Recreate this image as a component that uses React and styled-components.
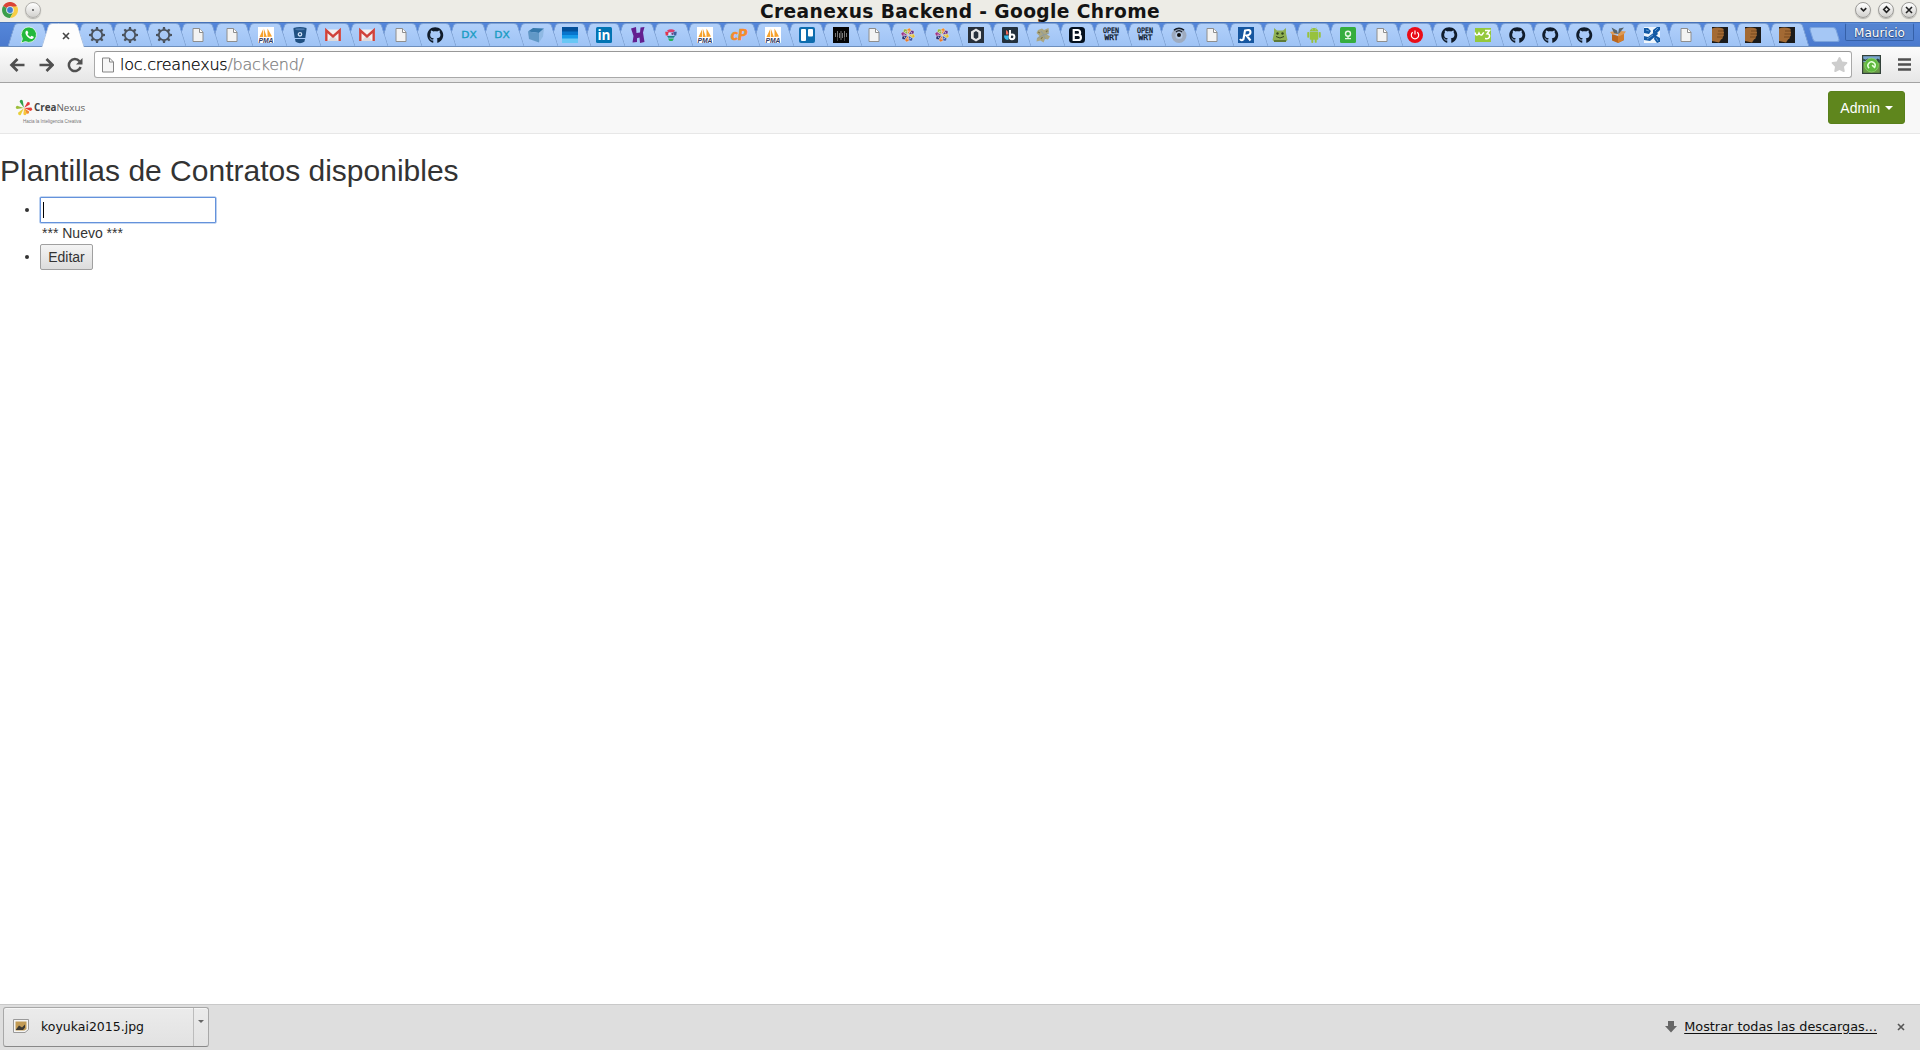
import React from "react";
import styled, { createGlobalStyle, css } from "styled-components";
import { FaGithub, FaStar } from "react-icons/fa";
import { AiFillAndroid } from "react-icons/ai";

const GlobalStyle = createGlobalStyle`
  * { box-sizing: border-box; }
  html, body { margin: 0; padding: 0; background: #fff; overflow: hidden; }
`;

const uiFont = css`font-family: "DejaVu Sans", sans-serif;`;

const Window = styled.div`
  display: flex;
  flex-direction: column;
  width: 1920px;
  height: 1050px;
  overflow: hidden;
`;

const TitleBar = styled.header`
  display: grid;
  grid-template-columns: 90px 1fr 90px;
  align-items: center;
  height: 22px;
  flex: none;
  background: #edece6;
`;
const TitleLeft = styled.div`
  display: flex;
  align-items: center;
  gap: 7px;
  padding: 0 0 3px 2px;
  svg { display: block; }
`;
const Title = styled.div`
  ${uiFont}
  text-align: center;
  font-weight: bold;
  font-size: 18.67px;
  letter-spacing: 0.38px;
  line-height: 22px;
  padding-top: 1px;
  height: 22px;
  color: #141414;
  white-space: nowrap;
`;
const TitleButtons = styled.div`
  display: flex;
  justify-content: flex-end;
  gap: 7px;
  padding: 0 3px 3px 0;
`;
const RoundButton = styled.span`
  display: flex;
  align-items: center;
  justify-content: center;
  width: 16px;
  height: 16px;
  border-radius: 50%;
  border: 1px solid ${(p) => (p.$soft ? "#b0afab" : "#9c9b98")};
  background: linear-gradient(#fff, #d2d1ce);
  box-shadow: 0 1px 1px rgba(0, 0, 0, 0.25);
`;

const TabStrip = styled.nav`
  display: flex;
  align-items: flex-end;
  height: 25px;
  flex: none;
  padding-left: 7.5px;
  background: linear-gradient(#5486da, #4b7acd);
  border-top: 1px solid #4672b8;
  border-bottom: 1px solid #6d8fbd;
  position: relative;
`;
const Tab = styled.div`
  position: relative;
  z-index: ${(p) => p.$z};
  flex: none;
  display: flex;
  align-items: center;
  justify-content: center;
  width: 43px;
  height: ${(p) => (p.$active ? 24 : 23)}px;
  margin-right: -9.2px;
  margin-bottom: ${(p) => (p.$active ? -1 : 0)}px;
  padding-top: 1px;
  padding-left: ${(p) => (p.$active ? 6 : 0)}px;
  svg { display: block; position: relative; z-index: 1; overflow: visible; }
  &::before, &::after {
    content: "";
    position: absolute;
    top: 0;
    bottom: 0;
    width: 18px;
    background: ${(p) => (p.$active ? "#fdfdfd" : "linear-gradient(#b1d0fa, #9fc3f5)")};
    border: 0 solid ${(p) => (p.$active ? "#a9bfdf" : "#7fa2d3")};
    border-top-width: 1px;
  }
  &::before {
    left: 3.2px;
    border-left-width: 1px;
    border-top-left-radius: 4px;
    transform: skewX(-17deg);
  }
  &::after {
    right: 3.2px;
    border-right-width: 1px;
    border-top-right-radius: 4px;
    transform: skewX(17deg);
  }
`;
const TabFill = styled.span`
  position: absolute;
  left: 14px;
  right: 14px;
  top: 1px;
  bottom: 0;
  z-index: 1;
  background: ${(p) => (p.$active ? "#fdfdfd" : "linear-gradient(#b1d0fa, #9fc3f5)")};
`;
const NewTab = styled.span`
  width: 27px;
  height: 15px;
  margin: 0 0 4px 11px;
  transform: skewX(17deg);
  border: 1px solid #7ba3dc;
  border-radius: 3px;
  background: #a5c7f5;
`;
const Profile = styled.span`
  ${uiFont}
  margin: 0 6px 5px auto;
  width: 69px;
  height: 18px;
  border: 1px solid #3560a8;
  border-top-color: #5b8ddc;
  border-radius: 2px;
  background: #5483d0;
  color: #fff;
  font-size: 12px;
  line-height: 18px;
  text-align: center;
  text-shadow: 0 1px 1px #223f70, 0 0 1px #223f70;
`;

const Toolbar = styled.div`
  display: flex;
  align-items: center;
  height: 36px;
  flex: none;
  padding: 0 9px;
  background: linear-gradient(#fcfcfc, #e6e6e6);
  border-bottom: 1px solid #a3a3a3;
`;
const NavIcons = styled.div`
  display: flex;
  gap: 13px;
  width: 85px;
  svg { display: block; }
`;
const Omnibox = styled.div`
  ${uiFont}
  display: flex;
  align-items: center;
  flex: 1;
  height: 27px;
  padding: 0 3px 0 7px;
  margin-right: 10px;
  border: 1px solid #a9a9a9;
  border-top-color: #989898;
  border-radius: 3px;
  background: #fff;
  font-size: 16px;
  color: #000;
`;
const Url = styled.span`
  flex: 1;
  margin-left: 6px;
  font-weight: 200;
  letter-spacing: -0.23px;
  white-space: nowrap;
  -webkit-text-stroke: 0.25px currentColor;
`;
const UrlPath = styled.span`color: #808080;`;
const ToolbarEnd = styled.div`
  display: flex;
  align-items: center;
  gap: 17px;
  svg { display: block; }
`;

const SiteBar = styled.div`
  display: flex;
  justify-content: space-between;
  align-items: flex-start;
  height: 51px;
  flex: none;
  padding: 8px 15px 0 15px;
  background: #f8f8f8;
  border-bottom: 1px solid #e7e7e7;
`;
const Brand = styled.div`
  display: flex;
  flex-direction: column;
  margin-top: 7px;
`;
const BrandRow = styled.div`
  display: flex;
  align-items: center;
  height: 19px;
  font: 9.8px/18px "Open Sans", sans-serif;
  color: #606060;
  b { color: #444; font-weight: 700; }
  svg { margin-right: 1px; }
`;
const Slogan = styled.div`
  font: 4.5px/7px "Liberation Sans", sans-serif;
  color: #777;
  margin-left: 8px;
  padding-top: 1px;
  white-space: nowrap;
`;
const AdminButton = styled.button`
  display: flex;
  align-items: center;
  height: 33px;
  padding: 0 11.5px;
  border: 1px solid #59801b;
  border-radius: 3px;
  background: #5f861d;
  color: #fff;
  font: 14px/20px "Liberation Sans", Arial, sans-serif;
`;
const Caret = styled.span`
  margin-left: 4.5px;
  border: 4px solid transparent;
  border-top-color: #fff;
  border-bottom: 0;
`;

const Content = styled.main`
  flex: 1;
  background: #fff;
  color: #333;
  font: 14px/20px "Liberation Sans", Arial, sans-serif;
`;
const Heading = styled.h2`
  margin: 20px 0 9px;
  font-size: 30px;
  font-weight: 500;
  line-height: 33px;
`;
const List = styled.ul`
  margin: 0;
  padding-left: 40px;
`;
const TextInput = styled.div`
  display: inline-flex;
  align-items: center;
  vertical-align: middle;
  width: 176px;
  height: 26px;
  padding-left: 2px;
  border: 1px solid #6492db;
  border-radius: 1px;
  box-shadow: 0 0 0 0.6px #8db1e6;
  background: #fff;
`;
const Cursor = styled.span`
  width: 1px;
  height: 16px;
  background: #000;
`;
const Option = styled.div`padding-left: 2px;`;
const EditButton = styled.button`
  width: 53px;
  height: 26px;
  padding: 0;
  vertical-align: middle;
  border: 1px solid #a0a0a0;
  border-radius: 2px;
  background: linear-gradient(#f4f4f4, #dcdcdc);
  color: #333;
  font: 14px/20px "Liberation Sans", Arial, sans-serif;
`;
const Item = styled.li`
  height: ${(p) => p.$h}px;
  line-height: 26px;
  ${Option} { line-height: 20px; }
`;

const Shelf = styled.footer`
  ${uiFont}
  display: flex;
  align-items: center;
  height: 46px;
  flex: none;
  padding: 0 15px 1px 3px;
  background: #dedede;
  border-top: 1px solid #c9c9c9;
  color: #111;
`;
const Download = styled.div`
  display: flex;
  width: 206px;
  height: 40px;
  border: 1px solid #a8a8a8;
  border-bottom-color: #888;
  border-radius: 3px;
  background: linear-gradient(#ebebeb, #e2e2e2);
  box-shadow: inset 0 1px #f6f6f6;
`;
const DownloadName = styled.div`
  display: flex;
  align-items: center;
  gap: 12px;
  flex: 1;
  padding: 0 0 2px 9px;
  font-size: 12.5px;
`;
const DownloadMenu = styled.div`
  display: flex;
  justify-content: center;
  width: 15px;
  padding-top: 12px;
  border-left: 1px solid #bcbcbc;
  &::after {
    content: "";
    height: 3px;
    border: 3px solid transparent;
    border-top-color: #666;
    border-bottom: 0;
  }
`;
const ShelfEnd = styled.div`
  display: flex;
  align-items: center;
  margin-left: auto;
  font-size: 12.85px;
  a { color: #111; text-decoration: underline; text-underline-offset: 2px; margin: 0 20px 0 7px; padding-bottom: 2px; white-space: nowrap; }
`;

const Svg = ({ s = 16, children, ...rest }) => (
  <svg width={s} height={s} viewBox="0 0 16 16" {...rest}>{children}</svg>
);

const Page = () => (
  <Svg>
    <path d="M3 1.500h6.500l3.500 3.500v9.500H3z" fill="#f3f3f3" stroke="#8e8e8e" />
    <path d="M9.500 1.500v4H13" fill="#fff" stroke="#8e8e8e" />
  </Svg>
);
const Gear = () => (
  <Svg>
    <circle cx="8" cy="8" r="5.200" fill="none" stroke="#4b535e" strokeWidth="1.800" />
    {[0, 45, 90, 135, 180, 225, 270, 315].map((a) => (
      <path key={a} d="M6.500 2.800L7 0h2l.5 2.800z" fill="#4b535e" transform={`rotate(${a} 8 8)`} />
    ))}
  </Svg>
);
const Pma = () => (
  <Svg>
    <rect width="16" height="16" fill="#fff" />
    <path d="M1.500 10L5 2.500V10zM5.800 10V1.500l3 8.500zM9.500 10V1.500l4.500 8z" fill="#f6a22d" />
    <text x="8" y="15.900" textAnchor="middle" fontFamily="Liberation Sans" fontWeight="bold" fontStyle="italic" fontSize="6.800" textLength="15" lengthAdjust="spacingAndGlyphs" fill="#33385f">PMA</text>
  </Svg>
);
const Bucket = () => (
  <Svg>
    <path d="M1.500 2.500V1Q8-1 14.500 1v1.500L13.300 11H2.700zM3 12h10l-.6 2.800Q8 17.500 3.600 14.800z" fill="#205081" />
    <ellipse cx="8" cy="2.300" rx="4.800" ry="1" fill="#4a78ad" />
    <circle cx="8" cy="7.300" r="1.700" fill="none" stroke="#cfe0f5" strokeWidth="1.300" />
  </Svg>
);
const Gmail = () => (
  <Svg>
    <path d="M0 2.500h16v11.500H0z" fill="#f3efef" />
    <path d="M2.500 14L8 8l5.500 6z" fill="#dedada" />
    <path d="M1.300 14V3.500L8 9.300l6.700-5.800V14" fill="none" stroke="#d0423a" strokeWidth="2.400" />
  </Svg>
);
const Hub = () => <FaGithub size={16.5} color="#101c2b" />;
const Dx = () => (
  <Svg><text x="8" y="11" textAnchor="middle" fontFamily="DejaVu Sans" fontSize="9.500" textLength="15.500" lengthAdjust="spacingAndGlyphs" fill="#179cc2" stroke="#179cc2" strokeWidth=".3">DX</text></Svg>
);
const Cube = () => (
  <Svg>
    <path d="M0 4.500L5 1l11 .5-5 4.500z" fill="#3678ab" /><path d="M0 4.500L11 6v9.500L1 12z" fill="#6198c6" /><path d="M11 6l5-4.500-1 8-4 6z" fill="#8fb9e4" />
  </Svg>
);
const Bands = () => (
  <Svg><path d="M0 0h16v5H0z" fill="#03509a" /><path d="M0 4.500h16V8H0z" fill="#0874cc" /><path d="M0 8h16v4H0z" fill="#1699e8" /><path d="M0 11.500h16V16H0z" fill="#68c7f5" /></Svg>
);
const Linked = () => (
  <Svg><rect width="16" height="16" rx="1.500" fill="#0274b3" /><text x="8" y="13" textAnchor="middle" fontFamily="Open Sans" fontWeight="bold" fontSize="13.500" fill="#fff">in</text></Svg>
);
const Heidi = () => (
  <Svg><path d="M1 1.500L6 0l.5 6L10 5.500 10.500.5 14.500 0l-1.500 5.500L14.500 15l-4.500 1-.5-5.500-2.500.8V15l-4.500.5L3.500 9z" fill="#63208f" /></Svg>
);
const Sphere = () => (
  <Svg>
    <path d="M4 3.600Q8 .8 12 3.600l-1.500 1.600h-5z" fill="#dc3c6c" />
    <path d="M2.200 4.800h3.500L5 8.500H2.800z" fill="#e3344c" /><path d="M10.300 4.800h3.500l-.6 3.700H11z" fill="#3d5f9e" />
    <circle cx="6.600" cy="6.800" r="1.100" fill="#e8eef8" /><circle cx="9.500" cy="6.800" r="1.100" fill="#7a3c78" />
    <path d="M4 9h8l-1.200 1.800H5.200z" fill="#1b7f86" /><path d="M5 11.400h6L9.500 14h-3z" fill="#24b45b" />
  </Svg>
);
const Cpanel = () => (
  <Svg><text x="8" y="12.800" textAnchor="middle" fontFamily="Lato" fontWeight="900" fontStyle="italic" fontSize="14.500" textLength="16" lengthAdjust="spacingAndGlyphs" fill="#f58b2b" stroke="#f58b2b" strokeWidth=".6">cP</text></Svg>
);
const Trello = () => (
  <Svg><rect width="16" height="16" rx="2" fill="#0d6cad" /><rect x="2" y="2" width="5" height="12" rx="1" fill="#fff" /><rect x="9" y="2" width="5" height="7.500" rx="1" fill="#fff" /></Svg>
);
const Wave = () => (
  <Svg><rect width="16" height="16" fill="#050505" /><path d="M2.500 6v4M4.500 4v6M6.500 6v5M8 4v9M9.500 6v5M11.500 4v6M13.500 6v4" stroke="#858585" strokeWidth=".9" /><path d="M4.500 10v4M11.500 10v4" stroke="#444" /></Svg>
);
const Pinwheel = () => (
  <Svg>
    {["#f08c2e", "#6d3285", "#e3bd2f", "#3d5ba9", "#e67a2c", "#262f72", "#9c3584", "#97b63a"].map((c, i) => (
      <g key={c} transform={`rotate(${i * 45 + 12} 8 8)`}>
        <path d="M8 7.500L5.800 2.500 8 .8l2.200 1.700z" fill={c} stroke="#eef2fb" strokeWidth=".3" />
        <circle cx="8" cy="4" r=".55" fill="#eef2fb" />
      </g>
    ))}
  </Svg>
);
const Hexagon = () => (
  <Svg><rect width="16" height="16" fill="#27303b" /><path d="M8 1.500l5 3v7l-5 3-5-3v-7z" fill="#e6e6e6" /><path d="M8 4l2.300 1.500v5L8 12l-2.300-1.500v-5z" fill="#27303b" /></Svg>
);
const Letter6 = () => (
  <Svg><rect width="16" height="16" rx="1" fill="#23303c" /><path d="M4 3q2.500 1 2.500 4.500H4z" fill="#f26b5b" /><path d="M2 8.500h4.500V13Q2 13 2 8.500z" fill="#37b7e8" /><circle cx="10" cy="9.800" r="2.400" fill="none" stroke="#fff" strokeWidth="2" /><path d="M8 3v7" stroke="#fff" strokeWidth="1.900" /></Svg>
);
const Fan = () => (
  <Svg><path d="M3 3l4-1.500 2 1.500 4.500-2 .5 4-2 2.500 3 2-2 3-3-.5-1.500 3.500-3-2-4 1L2 11l2.500-2L1.500 6z" fill="#aba682" /><path d="M6 4l3 4 5-2M2.500 11.500L8 8l2.500 4" stroke="#8f9b9c" fill="none" strokeWidth="1" /><path d="M5 6l-2-1M11 5l1.500-1.500M6 12l1.500-2" stroke="#7e7448" strokeWidth="1.200" /></Svg>
);
const Boot = () => (
  <Svg><rect width="16" height="16" rx="3.500" fill="#04101e" /><path d="M4.700 3h4a2.300 2.300 0 010 4.800h-4zM4.700 7.800h4.600a2.600 2.600 0 010 5.200H4.700z" fill="none" stroke="#fff" strokeWidth="2.200" /></Svg>
);
const Wrt = () => (
  <Svg>
    <g fontFamily="DejaVu Sans Mono" fontSize="7.500" fill="#0a1526" stroke="#0a1526" strokeWidth=".3" textAnchor="middle">
      <text x="8" y="5.800" textLength="16" lengthAdjust="spacingAndGlyphs">OPEN</text><text x="8.500" y="13.300" textLength="14" lengthAdjust="spacingAndGlyphs">WRT</text>
    </g>
  </Svg>
);
const Eye = () => (
  <Svg><circle cx="8" cy="8.500" r="7.500" fill="#9eabbf" /><circle cx="8" cy="8.500" r="3.600" fill="#b4c8e4" /><circle cx="8" cy="8" r="2" fill="#111" /><path d="M3 3.200Q8-.8 13 3.200" fill="none" stroke="#18202c" strokeWidth="1.500" /><path d="M5 5Q8 2.300 11 5" fill="none" stroke="#18202c" strokeWidth="1.200" /></Svg>
);
const Note = () => (
  <Svg><rect width="16" height="16" fill="#16569f" /><path d="M2 12q1.500 2.500 3.500 0L7 3.500Q12.500 2 12.500 5q0 3-4 3.500l4 5" fill="none" stroke="#fff" strokeWidth="2.100" /></Svg>
);
const Creature = () => (
  <Svg><path d="M2 1l3 2.500h6L14 1v5l1.500 7-2 2h-11L.5 13 2 6z" fill="#8fb052" /><path d="M2 13h12v2H2z" fill="#5d7a36" /><circle cx="5.500" cy="6.500" r="1.200" fill="#31451c" /><circle cx="10.500" cy="6.500" r="1.200" fill="#31451c" /><path d="M4 9.500q4 3 8 0" stroke="#31451c" fill="none" /></Svg>
);
const Droid = () => <AiFillAndroid size={18} color="#97c23c" />;
const Green = () => (
  <Svg><rect width="16" height="16" rx="1.500" fill="#35ad3e" /><circle cx="8" cy="6.700" r="2.500" fill="none" stroke="#e6f6e4" strokeWidth="1.400" /><path d="M8 9v2M5 11.700h6" stroke="#e6f6e4" strokeWidth="1.300" /></Svg>
);
const Power = () => (
  <Svg><circle cx="8" cy="8" r="8" fill="#ea0c17" /><path d="M5.700 5.300a3.700 3.700 0 104.600 0M8 3.500v4" fill="none" stroke="#fff" strokeWidth="1.200" /></Svg>
);
const W3 = () => (
  <Svg><rect y="1" width="16" height="14" fill="#94c83d" /><path d="M.3 5.500v1.300Q1.500 9 3.300 7.500L4 6l.8 1.500Q7 9 7.800 6.500L9 5.500" fill="none" stroke="#fff" strokeWidth="1.500" /><path d="M10 3.500h4.500L12 6.800q3 .2 2.500 2.800t-4.500 2" fill="none" stroke="#fff" strokeWidth="1.500" /></Svg>
);
const Crate = () => (
  <Svg><path d="M2 7l6 2 6-3v7l-6 3-6-2.500z" fill="#b9651d" /><path d="M8 9l6-3v7l-6 3z" fill="#d07c2c" /><path d="M2 7.500L0 5l5-1 3 3zM8 7l3-3 5 .5-2 2.500-5.500 2.500z" fill="#dd9a55" /><path d="M1.500.5L7 3.500l1 3.500-4-1zM9 1.500l5-1L9.500 6 8 7z" fill="#59656b" /></Svg>
);
const Knot = () => (
  <Svg>
    <rect width="16" height="16" fill="#eef5fc" />
    <path d="M0 1h4l3 3-2 3-5-1zM9 3l4-3h3v3l-4 4-3-1zM0 9l4 1 8-6 2 3-8 7-6-1zM11 8l5 3v4l-3 1-3-4z" fill="#1259a4" />
    <path d="M2 3l3 1M11 4l3-3M3 12l6-4M12 11l2 3" stroke="#6da3d8" strokeWidth=".9" />
  </Svg>
);
const Fist = () => (
  <Svg><rect width="16" height="16" fill="#1b1b1b" /><path d="M0 1.500Q5-.5 11 1.500q1.500 1 .3 2.500 1.500 1.500.2 3 1.200 1.500-.8 3 .6 1.800-1.700 2.500L7 15.500 0 14z" fill="#a36a34" /><path d="M6 4h5M5.500 7h6M5 10h5.500" stroke="#6d421b" strokeWidth=".8" /></Svg>
);
const Whats = () => (
  <Svg><path d="M8.200 0a7.700 7.700 0 11-3.800 14.600L0 16l1.400-4.200A7.700 7.700 0 018.200 0z" fill="#22b93c" stroke="#e9f8ea" strokeWidth=".8" /><path d="M5.200 3.700c-2.300 2 .8 7 5 8.300 1.700.3 2.800-1 2.500-2.200L10.500 8.700 9.200 10C7.700 9.300 6.900 8.200 6.400 7.100L7.400 6 6.400 3.700z" fill="#fff" /></Svg>
);
const Close = ({ s = 8, color = "#444" }) => (
  <svg width={s} height={s} viewBox="0 0 8 8"><path d="M1 1l6 6M7 1L1 7" stroke={color} strokeWidth="1.600" /></svg>
);

const tabs = [
  Whats, Close, Gear, Gear, Gear, Page, Page, Pma, Bucket, Gmail, Gmail, Page, Hub, Dx, Dx, Cube, Bands,
  Linked, Heidi, Sphere, Pma, Cpanel, Pma, Trello, Wave, Page, Pinwheel, Pinwheel, Hexagon, Letter6, Fan,
  Boot, Wrt, Wrt, Eye, Page, Note, Creature, Droid, Green, Page, Power, Hub, W3, Hub, Hub, Hub, Crate,
  Knot, Page, Fist, Fist, Fist,
];

const petals = [
  ["#e2383c", 45, 8.5], ["#e63f35", 100, 9], ["#f08a30", 140, 8], ["#f6c437", 170, 8],
  ["#e8cf3b", 218, 9.5], ["#9cbf3b", 275, 9], ["#35a04a", 338, 9.5],
];

export default function App() {
  return (
    <Window>
      <GlobalStyle />
      <TitleBar>
        <TitleLeft>
          <Svg>
            <path d="M8 8L1.100 4A8 8 0 0115 4z" fill="#db4437" />
            <path d="M8 8L1.100 4A8 8 0 008 16l3.500-6z" fill="#3c9e4b" />
            <path d="M8 4.500h7.200A8 8 0 018 16l3.500-6z" fill="#f7ce45" />
            <circle cx="8" cy="8" r="3.800" fill="#e9eef5" /><circle cx="8" cy="8" r="2.900" fill="#3f7fd0" />
          </Svg>
          <RoundButton $soft><svg width="4" height="4"><circle cx="2" cy="2" r="1" fill="#555" /></svg></RoundButton>
        </TitleLeft>
        <Title>Creanexus Backend - Google Chrome</Title>
        <TitleButtons>
          <RoundButton><Svg s={11}><path d="M4 6l4 4 4-4" fill="none" stroke="#222" strokeWidth="2.400" /></Svg></RoundButton>
          <RoundButton><Svg s={11}><path d="M8 4l4 4-4 4-4-4z" fill="none" stroke="#222" strokeWidth="2.400" /></Svg></RoundButton>
          <RoundButton><Close s={8} color="#222" /></RoundButton>
        </TitleButtons>
      </TitleBar>

      <TabStrip>
        {tabs.map((Icon, i) => (
          <Tab key={i} $active={i === 1} $z={i === 1 ? 99 : 60 - i}>
            <TabFill $active={i === 1} />
            <Icon />
          </Tab>
        ))}
        <NewTab />
        <Profile>Mauricio</Profile>
      </TabStrip>

      <Toolbar>
        <NavIcons>
          <Svg><path d="M15.500 8H3.500M8.500 2l-6 6 6 6" fill="none" stroke="#505050" strokeWidth="2.700" /></Svg>
          <Svg><path d="M1.500 8h12M8.500 2l6 6-6 6" fill="none" stroke="#505050" strokeWidth="2.700" /></Svg>
          <Svg><path d="M12.500 4.200A6 6 0 1013.600 10" fill="none" stroke="#505050" strokeWidth="2.500" /><path d="M15.500 1v6.500H9z" fill="#505050" /></Svg>
        </NavIcons>
        <Omnibox>
          <svg width="12" height="16" viewBox="0 0 12 16">
            <path d="M.5 1h7l4 4v10H.5zM7.500 1v4h4" fill="#f6f6f6" stroke="#858585" />
          </svg>
          <Url>loc.creanexus<UrlPath>/backend/</UrlPath></Url>
          <FaStar size={17} color="#cdcdcd" />
        </Omnibox>
        <ToolbarEnd>
          <Svg s={19}>
            <rect width="16" height="16" fill="#33423a" /><path d="M1 1h14v5H1z" fill="#78a3cc" /><path d="M1 6h14v9H1z" fill="#6a9a48" />
            <path d="M1 3l2 1 2-1 1 2H1zM11 5l2-2 2 1v3z" fill="#2d4a3c" />
            <circle cx="8" cy="8.500" r="5.800" fill="#5fb93e" stroke="#8ed66c" strokeWidth=".6" /><path d="M6 11a3 3 0 114.500-.5M8.500 8.500L11 11" fill="none" stroke="#e9ffe0" strokeWidth="1.300" />
          </Svg>
          <svg width="13" height="13"><path d="M0 1.500h13M0 6.500h13M0 11.500h13" stroke="#505050" strokeWidth="2.700" /></svg>
        </ToolbarEnd>
      </Toolbar>

      <SiteBar>
        <Brand>
          <BrandRow>
            <svg width="18" height="18" viewBox="0 0 18 18">
              {petals.map(([c, a, l]) => (
                <path key={a} d={`M9 8.700L7.300 ${11 - l}Q9 ${8.500 - l} 10.700 ${11 - l}z`} fill={c} transform={`rotate(${a} 9 9)`} />
              ))}
            </svg>
            <span><b>Crea</b>Nexus</span>
          </BrandRow>
          <Slogan>Hacia la Inteligencia Creativa</Slogan>
        </Brand>
        <AdminButton>Admin<Caret /></AdminButton>
      </SiteBar>

      <Content>
        <Heading>Plantillas de Contratos disponibles</Heading>
        <List>
          <Item $h={47}>
            <TextInput><Cursor /></TextInput>
            <Option>*** Nuevo ***</Option>
          </Item>
          <Item $h={26}><EditButton>Editar</EditButton></Item>
        </List>
      </Content>

      <Shelf>
        <Download>
          <DownloadName>
            <Svg>
              <path d="M.5 1.500h15v10L12 14.500H.5z" fill="#f5f5f5" stroke="#999" /><path d="M2.500 3.500h11V11l-2 1.500h-9z" fill="#c29b55" /><path d="M3 11.500l3-4 3 2 3-3v3l-2 2.500H3z" fill="#3d3a33" />
            </Svg>
            koyukai2015.jpg
          </DownloadName>
          <DownloadMenu />
        </Download>
        <ShelfEnd>
          <svg width="12" height="12" viewBox="0 0 12 12"><path d="M3 0h6v5h3L6 11.500 0 5h3z" fill="#666" /></svg>
          <a>Mostrar todas las descargas...</a>
          <Close s={8} color="#555" />
        </ShelfEnd>
      </Shelf>
    </Window>
  );
}
